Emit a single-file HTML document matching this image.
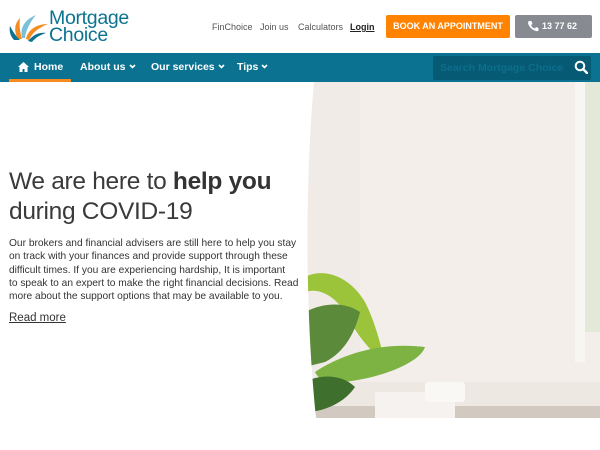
<!DOCTYPE html>
<html><head><style>
*{margin:0;padding:0;box-sizing:border-box}
body{width:600px;height:450px;overflow:hidden;background:#fff;font-family:"Liberation Sans",sans-serif;position:relative}
.top a{position:absolute;font-size:9px;color:#555;text-decoration:none;top:22px}
.nav{position:absolute;top:53px;left:0;width:600px;height:29px;background:#0b7391}
.nav span{position:absolute;top:8px;color:#fff;font-weight:bold;font-size:10.5px;white-space:nowrap}
.nav span svg{margin-left:3px;vertical-align:1px}
.hero{position:absolute;left:305px;top:82px;width:295px;height:336px;overflow:hidden;background:#f4eeea}
h1{position:absolute;left:9px;top:167px;font-weight:normal;font-size:24.5px;line-height:30px;color:#3a3a3a;white-space:nowrap;letter-spacing:-0.3px}
h1 b{font-weight:bold;color:#333}
p{position:absolute;left:9px;top:237px;font-size:10.2px;line-height:13.3px;color:#333;white-space:nowrap}
.rm{position:absolute;left:9px;top:312px;font-size:11.5px;color:#333;text-decoration:underline}
</style></head><body>
<svg style="position:absolute;left:8px;top:12px" width="40" height="30" viewBox="0 0 40 30">
<path d="M14 26 C12 16 16 8 28 3 C22 10 18 18 17 26Z" fill="#7bbfd9"/>
<path d="M10 27 C6 20 6 12 12 6 C11 14 12 20 14 27Z" fill="#f68b1f"/>
<path d="M18 27 C20 18 28 12 40 12 C30 16 24 21 21 28Z" fill="#f68b1f"/>
<path d="M6 28 C2 24 1 18 2 14 C5 20 8 24 12 28Z" fill="#0b7391"/>
<path d="M20 29 C26 22 32 20 38 21 C32 23 27 26 24 30Z" fill="#0b7391"/>
</svg>
<div style="position:absolute;left:49px;top:10px;color:#0b7391;font-size:19.5px;line-height:17px;letter-spacing:-0.3px">Mortgage<br>Choice</div>
<div class="top"><a style="left:212px">FinChoice</a><a style="left:260px">Join us</a><a style="left:298px">Calculators</a><a style="left:350px;color:#222;font-weight:bold;text-decoration:underline">Login</a></div>
<div style="position:absolute;left:386px;top:15px;width:124px;height:23px;background:#ff8300;border-radius:2px;color:#fff;font-weight:bold;font-size:9px;text-align:center;line-height:23px">BOOK AN APPOINTMENT</div>
<div style="position:absolute;left:515px;top:15px;width:77px;height:23px;background:#878a91;border-radius:2px;color:#fff;font-weight:bold;font-size:9px;line-height:23px;padding-left:27px">13 77 62</div>
<svg style="position:absolute;left:527px;top:20px" width="12" height="12" viewBox="0 0 12 12"><path d="M2 1 L4.5 1 L5.5 4 L4 5 C5 7 6 8 8 8.5 L9 7 L11.5 8 L11.5 10.5 C11 11 10 11.5 9 11 C5 10 2 7 1 3 C1 2 1.5 1.2 2 1Z" fill="#fff"/></svg>
<div class="nav">
<svg style="position:absolute;left:18px;top:9px" width="11" height="10" viewBox="0 0 11 10"><path d="M5.5 0 L11 5 L9.5 5 L9.5 10 L6.5 10 L6.5 7 L4.5 7 L4.5 10 L1.5 10 L1.5 5 L0 5Z" fill="#fff"/></svg>
<span style="left:34px">Home</span>
<div style="position:absolute;left:9px;top:26px;width:62px;height:3px;background:#f68b1f"></div>
<span style="left:80px">About us<svg width="7" height="5" viewBox="0 0 7 5"><path d="M1 1 L3.5 3.5 L6 1" stroke="#fff" stroke-width="1.6" fill="none"/></svg></span>
<span style="left:151px">Our services<svg width="7" height="5" viewBox="0 0 7 5"><path d="M1 1 L3.5 3.5 L6 1" stroke="#fff" stroke-width="1.6" fill="none"/></svg></span>
<span style="left:237px">Tips<svg width="7" height="5" viewBox="0 0 7 5"><path d="M1 1 L3.5 3.5 L6 1" stroke="#fff" stroke-width="1.6" fill="none"/></svg></span>
<div style="position:absolute;left:433px;top:3px;width:158px;height:24px;background:#075a73;border-radius:2px;color:#0b6f8c;font-weight:bold;font-size:10.5px;line-height:24px;padding-left:7px">Search Mortgage Choice</div>
<svg style="position:absolute;left:574px;top:7px" width="14" height="14" viewBox="0 0 14 14"><circle cx="6" cy="6" r="4.3" stroke="#fff" stroke-width="2" fill="none"/><path d="M9 9 L13 13" stroke="#fff" stroke-width="2.4" stroke-linecap="round"/></svg>
</div>
<div class="hero">
<div style="position:absolute;left:0;top:0;width:55px;height:336px;background:#f1ebe7"></div>
<div style="position:absolute;left:280px;top:0;width:15px;height:250px;background:#e4e8d8"></div>
<div style="position:absolute;left:270px;top:0;width:10px;height:280px;background:#f8f6f3"></div>
<div style="position:absolute;left:0;top:300px;width:295px;height:36px;background:#eee8e3"></div>
<div style="position:absolute;left:0;top:324px;width:295px;height:12px;background:#d2c9c1"></div>
<svg style="position:absolute;left:0;top:190px" width="200" height="146" viewBox="0 0 200 146">
<path d="M0 5 C20 -5 45 5 60 30 C70 50 75 70 80 90 C65 80 50 60 40 40 C30 25 15 15 0 20Z" fill="#9bc43a"/>
<path d="M0 40 C20 30 40 30 55 40 C50 60 40 80 20 90 L0 95Z" fill="#5b8a3a"/>
<path d="M10 100 C40 80 80 70 120 75 C115 90 80 105 40 110 C25 112 15 110 10 100Z" fill="#7cb342"/>
<path d="M0 110 C20 100 40 105 50 115 C40 130 20 140 0 140Z" fill="#3f6f2c"/>
<rect x="70" y="120" width="80" height="26" fill="#f5f2ef"/>
<rect x="120" y="110" width="40" height="20" rx="3" fill="#faf8f5"/>
</svg>
<svg style="position:absolute;left:0;top:0" width="20" height="336" viewBox="0 0 20 336"><path d="M0 0 L9 0 C0 100 0 230 11 336 L0 336Z" fill="#fff"/></svg>
</div>
<h1>We are here to <b>help you</b><br>during COVID-19</h1>
<p>Our brokers and financial advisers are still here to help you stay<br>on track with your finances and provide support through these<br>difficult times. If you are experiencing hardship, It is important<br>to speak to an expert to make the right financial decisions. Read<br>more about the support options that may be available to you.</p>
<div class="rm">Read more</div>
</body></html>
